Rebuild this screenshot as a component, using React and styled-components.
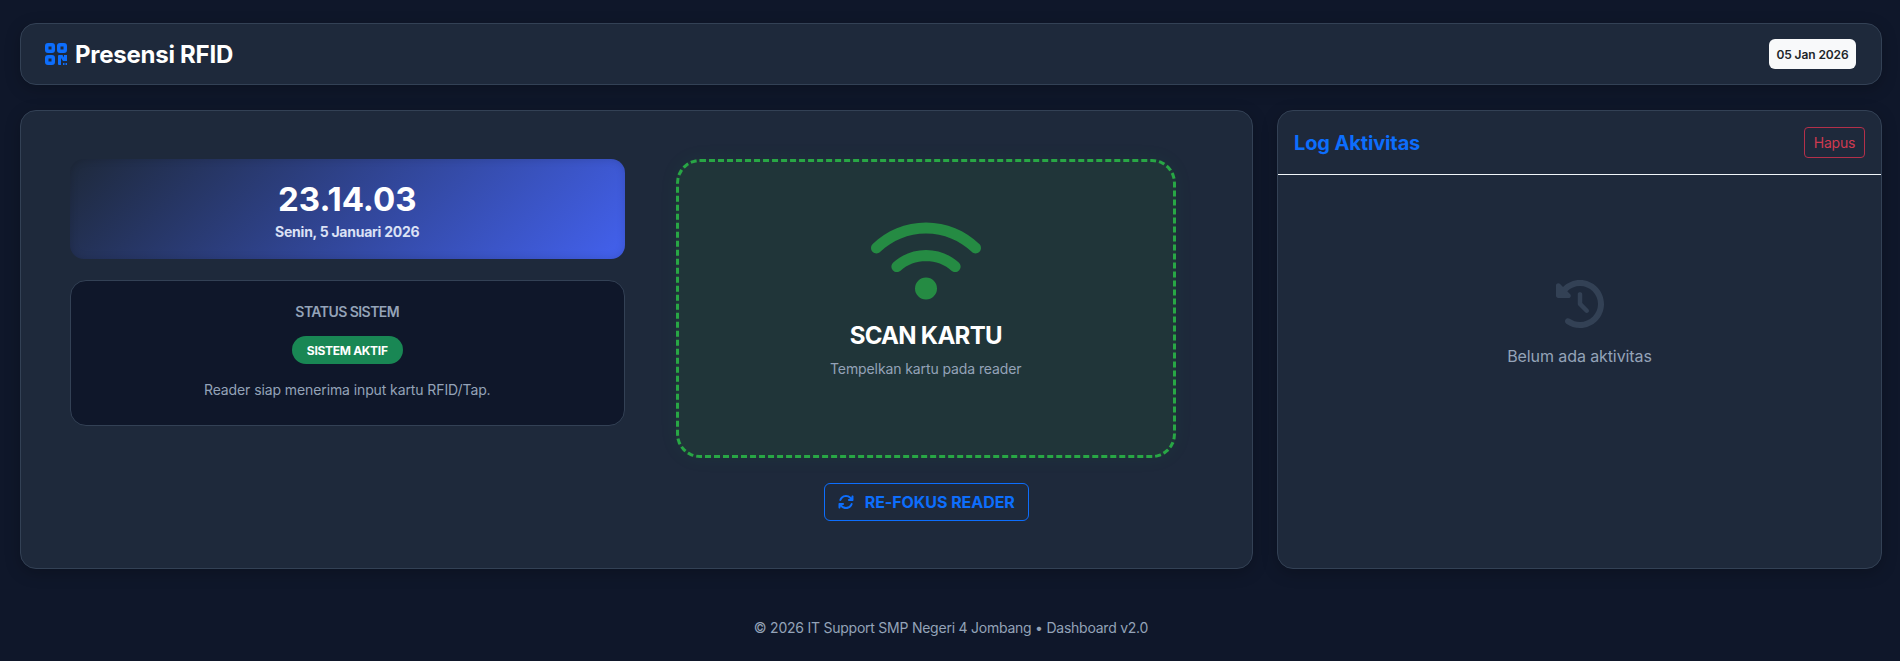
import React from "react";
import styled, { createGlobalStyle } from "styled-components";
import { FaWifi, FaArrowsRotate, FaClockRotateLeft } from "react-icons/fa6";

const Global = createGlobalStyle`
  * { box-sizing: border-box; }
  html, body { margin: 0; min-height: 100%; }
  body { background: #0f172a; font-family: Inter, "Liberation Sans", sans-serif; color: #f8fafc; }
`;
const Page = styled.div`
  padding: 23px 18px 0 20px;
  height: 661px;
  overflow: hidden;
`;
const Panel = styled.div`
  background: #1e293b;
  border: 1px solid #334155;
  border-radius: 16px;
  box-shadow: 0 4px 16px rgba(0, 0, 0, 0.22);
`;
const Header = styled(Panel)`
  height: 62px;
  display: flex;
  align-items: center;
  justify-content: space-between;
  padding: 0 25px 0 24px;
`;
const Brand = styled.div`
  display: flex;
  align-items: center;
  gap: 8px;
  font-size: 24px;
  font-weight: 700;
  letter-spacing: -0.25px;
  color: #fff;
`;
const QrIcon = styled.svg`
  width: 22px;
  height: 22px;
  color: #0d6efd;
  fill: currentColor;
  flex: none;
`;
const DateBadge = styled.div`
  background: #f8f9fa;
  color: #212529;
  border-radius: 6px;
  font-size: 12px;
  font-weight: 600;
  letter-spacing: -0.1px;
  height: 30px;
  width: 87px;
  display: flex;
  align-items: center;
  justify-content: center;
`;
const Main = styled.div`
  margin-top: 25px;
  display: grid;
  grid-template-columns: 1233px 605px;
  gap: 24px;
`;
const MainCard = styled(Panel)`
  height: 459px;
  padding: 48px 49px;
  display: grid;
  grid-template-columns: 1fr 1fr;
  gap: 24px;
`;
const LeftCol = styled.div`
  display: flex;
  flex-direction: column;
  gap: 21px;
`;
const ClockCard = styled.div`
  height: 100px;
  border-radius: 14px;
  background: linear-gradient(135deg, #1e293b 0%, #4361ee 100%);
  box-shadow: inset 0 0 8px rgba(0, 0, 0, 0.15);
  display: flex;
  flex-direction: column;
  align-items: center;
  padding-top: 20px;
`;
const Time = styled.div`
  font-size: 33px;
  font-weight: 700;
  line-height: 40px;
  color: #fff;
`;
const DateText = styled.div`
  font-size: 14px;
  font-weight: 700;
  line-height: 20px;
  margin-top: 3px;
  color: #dbe1f5;
  letter-spacing: -0.25px;
`;
const StatusCard = styled.div`
  height: 146px;
  border: 1px solid #334155;
  border-radius: 16px;
  background: #0f172a;
  display: flex;
  flex-direction: column;
  align-items: center;
  padding-top: 21px;
`;
const StatusTitle = styled.div`
  font-size: 14px;
  font-weight: 600;
  line-height: 20px;
  color: #94a3b8;
  letter-spacing: -0.55px;
`;
const Pill = styled.div`
  margin-top: 14px;
  height: 28px;
  width: 111px;
  border-radius: 14px;
  background: #198754;
  color: #fff;
  font-size: 12px;
  font-weight: 700;
  letter-spacing: -0.3px;
  display: flex;
  align-items: center;
  justify-content: center;
`;
const StatusText = styled.div`
  margin-top: 16px;
  font-size: 14px;
  line-height: 20px;
  color: #94a3b8;
  letter-spacing: -0.1px;
`;
const RightCol = styled.div`
  display: flex;
  flex-direction: column;
  align-items: center;
`;
const ScanZone = styled.div`
  width: 500px;
  height: 299px;
  border: 3px dashed #28a745;
  border-radius: 24px;
  background: #203539;
  box-shadow: 0 0 20px rgba(40, 167, 69, 0.06);
  display: flex;
  flex-direction: column;
  align-items: center;
  padding-top: 44px;
  svg { color: #258b43; font-size: 110px; display: block; }
`;
const ScanTitle = styled.div`
  margin-top: 5px;
  font-size: 24px;
  font-weight: 700;
  line-height: 30px;
  letter-spacing: -0.7px;
  color: #fff;
`;
const ScanHint = styled.div`
  margin-top: 8px;
  font-size: 14px;
  line-height: 20px;
  color: #94a3b8;
  letter-spacing: -0.1px;
`;
const RefocusButton = styled.button`
  margin: 25px 0 0 1px;
  height: 38px;
  width: 205px;
  background: transparent;
  border: 1px solid #0d6efd;
  border-radius: 6px;
  color: #0d6efd;
  font-family: inherit;
  font-size: 16px;
  font-weight: 700;
  letter-spacing: -0.05px;
  display: flex;
  align-items: center;
  justify-content: center;
  gap: 11px;
  padding: 0;
  svg { font-size: 16px; }
`;
const LogCard = styled(Panel)`
  height: 459px;
  overflow: hidden;
  display: flex;
  flex-direction: column;
`;
const LogHead = styled.div`
  height: 64px;
  border-bottom: 1px solid #f1f5f9;
  display: flex;
  align-items: center;
  justify-content: space-between;
  padding: 0 16px;
`;
const LogTitle = styled.div`
  font-size: 20px;
  font-weight: 700;
  letter-spacing: -0.13px;
  color: #0d6efd;
`;
const ClearButton = styled.button`
  width: 61px;
  height: 31px;
  background: transparent;
  border: 1px solid #b3304a;
  border-radius: 4px;
  color: #cf3a50;
  font-family: inherit;
  font-size: 14px;
  padding: 0;
  letter-spacing: -0.2px;
`;
const Empty = styled.div`
  display: flex;
  flex-direction: column;
  align-items: center;
  padding-top: 105px;
  color: #94a3b8;
  font-size: 16px;
  line-height: 24px;
  letter-spacing: -0.1px;
  svg { color: #334155; font-size: 48px; display: block; margin-bottom: 16px; }
`;
const Footer = styled.footer`
  margin-top: 48px;
  text-align: center;
  font-size: 14px;
  line-height: 21px;
  letter-spacing: -0.24px;
  color: #94a3b8;
`;

const QrGlyph = () => (
  <QrIcon viewBox="0 0 22 22" aria-hidden="true">
    <path
      fillRule="evenodd"
      d="M3 0h4a3 3 0 0 1 3 3v4a3 3 0 0 1-3 3H3a3 3 0 0 1-3-3V3a3 3 0 0 1 3-3zm.500 3.500v3h3v-3zM15 0h4a3 3 0 0 1 3 3v4a3 3 0 0 1-3 3h-4a3 3 0 0 1-3-3V3a3 3 0 0 1 3-3zm.500 3.500v3h3v-3zM3 12h4a3 3 0 0 1 3 3v4a3 3 0 0 1-3 3H3a3 3 0 0 1-3-3v-4a3 3 0 0 1 3-3zm.500 3.500v3h3v-3zM14 12h3.500l1.500 2.500V12h3v6h-4l-2-3v7h-2a1 1 0 0 1-1-1v-8a1 1 0 0 1 1-1zM18 20h1.500v2H18zM20.500 20H22v2h-1.500z"
    />
  </QrIcon>
);

export default function App() {
  return (
    <Page>
      <Global />
      <Header>
        <Brand><QrGlyph />Presensi RFID</Brand>
        <DateBadge>05 Jan 2026</DateBadge>
      </Header>
      <Main>
        <MainCard>
          <LeftCol>
            <ClockCard>
              <Time>23.14.03</Time>
              <DateText>Senin, 5 Januari 2026</DateText>
            </ClockCard>
            <StatusCard>
              <StatusTitle>STATUS SISTEM</StatusTitle>
              <Pill>SISTEM AKTIF</Pill>
              <StatusText>Reader siap menerima input kartu RFID/Tap.</StatusText>
            </StatusCard>
          </LeftCol>
          <RightCol>
            <ScanZone>
              <FaWifi />
              <ScanTitle>SCAN KARTU</ScanTitle>
              <ScanHint>Tempelkan kartu pada reader</ScanHint>
            </ScanZone>
            <RefocusButton><FaArrowsRotate />RE-FOKUS READER</RefocusButton>
          </RightCol>
        </MainCard>
        <LogCard>
          <LogHead>
            <LogTitle>Log Aktivitas</LogTitle>
            <ClearButton>Hapus</ClearButton>
          </LogHead>
          <Empty>
            <FaClockRotateLeft />
            Belum ada aktivitas
          </Empty>
        </LogCard>
      </Main>
      <Footer>© 2026 IT Support SMP Negeri 4 Jombang • Dashboard v2.0</Footer>
    </Page>
  );
}
